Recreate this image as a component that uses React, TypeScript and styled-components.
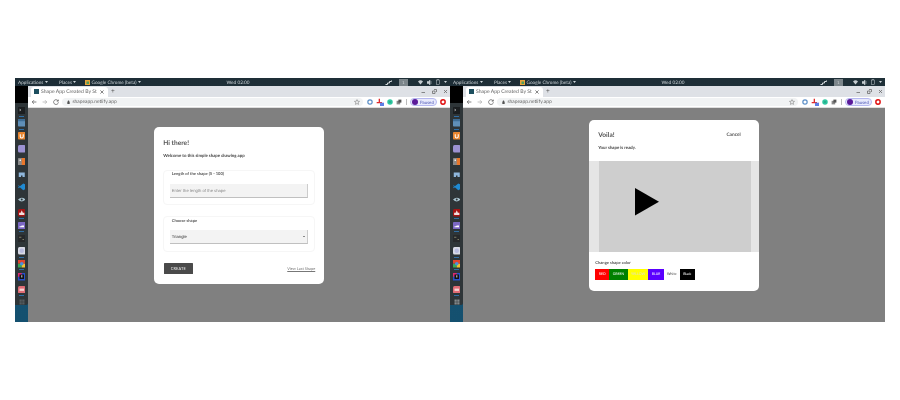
import React from "react";
import styled, { createGlobalStyle } from "styled-components";

const Global = createGlobalStyle`
  html, body { margin: 0; padding: 0; background: #fff; }
  body { font-family: Lato, "Liberation Sans", sans-serif; text-rendering: geometricPrecision; }
  * { box-sizing: border-box; }
`;

const Page = styled.div`
  width: 900px;
  height: 400px;
  padding: 78px 15px 78px;
  display: flex;
  overflow: hidden;
`;

const Screen = styled.div`
  width: 435px;
  height: 244px;
  display: flex;
  flex-direction: column;
  background: #808080;
  filter: blur(0.45px);
`;

const TopBar = styled.div`
  height: 8px;
  flex: none;
  display: flex;
  align-items: center;
  padding: 0 3px 0 3px;
  background: linear-gradient(90deg, #1d2d36, #1f3038);
  color: #cdd4d8;
  font-size: 4.7px;
  line-height: 8px;
  white-space: nowrap;
`;

const MenuItem = styled.span<{ $w: number }>`
  width: ${(p) => p.$w}px;
  display: flex;
  align-items: center;
  gap: 1.5px;
  flex: none;
`;

const Clock = styled.span`
  width: 60px;
  text-align: center;
  margin-left: 63px;
  flex: none;
`;

const Tray = styled.div`
  margin-left: auto;
  display: flex;
  align-items: center;
  gap: 4px;
`;

const WorkspaceBox = styled.span`
  width: 9px;
  height: 7px;
  margin: 0 6px 0 3px;
  background: #7c868b;
  color: #d5dadd;
  font-size: 4px;
  line-height: 7px;
  text-align: center;
`;

const Body = styled.div`
  flex: 1;
  min-height: 0;
  display: flex;
`;

const DockColumn = styled.div`
  width: 13px;
  flex: none;
  display: flex;
  flex-direction: column;
  background: linear-gradient(180deg, #1a5578, #14506f);
`;

const DockBlack = styled.div`
  height: 17px;
  flex: none;
  background: #000;
`;

const DockPanel = styled.div`
  height: 202px;
  flex: none;
  display: flex;
  flex-direction: column;
  align-items: center;
  padding-top: 1px;
  background: #2e3538;
  border-bottom-right-radius: 2px;
`;

const DockSlot = styled.div<{ $running?: boolean }>`
  height: 12.8px;
  width: 13px;
  flex: none;
  display: flex;
  justify-content: center;
  align-items: center;
  position: relative;
  &::after {
    content: "";
    display: ${(p) => (p.$running ? "block" : "none")};
    position: absolute;
    left: 4px;
    bottom: 0;
    width: 5px;
    height: 1px;
    background: #2f6ea5;
  }
`;

const Browser = styled.div`
  flex: 1;
  min-width: 0;
  display: flex;
  flex-direction: column;
`;

const TabStrip = styled.div`
  height: 11px;
  flex: none;
  background: #dee1e6;
  display: flex;
  align-items: flex-end;
  padding-left: 3px;
  padding-right: 3px;
`;

const Tab = styled.div`
  width: 77px;
  height: 10.5px;
  flex: none;
  background: #fff;
  border-radius: 3px 3px 0 0;
  display: flex;
  align-items: center;
  padding: 0 4px 0 3px;
  gap: 2px;
  font-size: 5.1px;
  color: #666;
  white-space: nowrap;
  overflow: hidden;
`;

const Favicon = styled.span`
  width: 5px;
  height: 5px;
  background: #1d4f5f;
  flex: none;
`;

const TabTitle = styled.span`
  flex: 1;
`;

const NewTab = styled.span`
  margin-left: 3px;
  align-self: center;
  font-size: 6.5px;
  line-height: 8px;
  color: #555;
`;

const WindowControls = styled.div`
  margin-left: auto;
  margin-right: -1px;
  align-self: center;
  display: flex;
  gap: 6px;
`;

const Toolbar = styled.div`
  height: 11px;
  flex: none;
  background: #fff;
  display: flex;
  align-items: center;
  padding-left: 3px;
  padding-right: 4px;
  border-bottom: 0.5px solid #ddd;
`;

const NavGroup = styled.div`
  display: flex;
  align-items: center;
  gap: 5px;
  flex: none;
`;

const Omnibox = styled.div`
  width: 301px;
  height: 8.5px;
  margin-left: 3px;
  flex: none;
  background: #f1f3f4;
  border-radius: 5px;
  display: flex;
  align-items: center;
  gap: 2.5px;
  padding: 0 3px 0 5px;
  font-size: 4.9px;
  color: #666;
`;

const Star = styled.span`
  margin-left: auto;
  display: flex;
`;

const Extensions = styled.div`
  display: flex;
  align-items: center;
  gap: 3px;
  margin-left: 4px;
  flex: none;
`;

const Divider = styled.span`
  width: 0.5px;
  height: 6px;
  background: #bbb;
  margin: 0 0 0 1px;
`;

const ProfilePill = styled.div`
  width: 27px;
  height: 8.5px;
  flex: none;
  border-radius: 5px;
  border: 0.5px solid #b5b8f0;
  background: #e8eafc;
  display: flex;
  align-items: center;
  gap: 2px;
  padding-left: 1px;
  color: #4a55b5;
  font-size: 4.4px;
`;

const Avatar = styled.span`
  width: 6.5px;
  height: 6.5px;
  border-radius: 50%;
  background: #5b1a9a;
  flex: none;
`;

const Content = styled.div`
  flex: 1;
  min-height: 0;
  background: #808080;
  display: flex;
  align-items: center;
  justify-content: center;
  padding-bottom: 20px;
`;

const Card = styled.div<{ $h: number }>`
  width: 169.5px;
  height: ${(p) => p.$h}px;
  background: #fff;
  border-radius: 5px;
  color: #333;
`;

const FormCard = styled(Card)`
  padding: 12px 9px 0;
`;

const Title = styled.h1`
  margin: 0;
  font-size: 6.6px;
  line-height: 8px;
  font-weight: 700;
  color: #555;
`;

const Lead = styled.p`
  margin: 6px 0 0;
  font-size: 4.3px;
  line-height: 6px;
  font-weight: 700;
  color: #444;
`;

const FieldGroup = styled.div<{ $top: number; $h: number }>`
  margin-top: ${(p) => p.$top}px;
  height: ${(p) => p.$h}px;
  width: 152px;
  border: 1px solid #f6f6f6;
  border-radius: 4px;
  padding: 0.5px 6px 0;
`;

const FieldLabel = styled.div<{ $gap: number }>`
  font-size: 4.1px;
  line-height: 5px;
  font-weight: 700;
  color: #555;
  padding-left: 1.5px;
  margin-bottom: ${(p) => p.$gap}px;
`;

const FieldBox = styled.div`
  height: 14px;
  width: 137.5px;
  background: #f3f3f3;
  border-bottom: 1px solid #c0c0c0;
  border-right: 0.5px solid #ccc;
  display: flex;
  align-items: center;
  justify-content: space-between;
  padding: 0 1.5px 0 1.5px;
  font-family: "Liberation Sans", Arial, sans-serif;
  font-size: 4.2px;
`;

const Placeholder = styled.span`
  color: #8a8a8a;
`;

const SelectValue = styled.span`
  color: #333;
`;

const Caret = styled.span`
  width: 0;
  height: 0;
  border-left: 1.2px solid transparent;
  border-right: 1.2px solid transparent;
  border-top: 1.8px solid #222;
`;

const FormFooter = styled.div`
  margin-top: 11px;
  width: 152px;
  display: flex;
  align-items: center;
  justify-content: space-between;
`;

const CreateButton = styled.button`
  width: 29px;
  height: 10.5px;
  margin-left: 0.5px;
  border: none;
  padding: 0;
  border-radius: 0.5px;
  background: #4a4a4a;
  color: #eee;
  font-family: Lato, sans-serif;
  font-size: 3.9px;
  letter-spacing: 0.15px;
`;

const LastLink = styled.a`
  font-size: 3.9px;
  color: #777;
  text-decoration: underline;
`;

const ResultCard = styled(Card)`
  display: flex;
  flex-direction: column;
`;

const ResultHeader = styled.div`
  height: 41px;
  flex: none;
  padding: 11.5px 18px 0 9px;
`;

const HeaderRow = styled.div`
  display: flex;
  justify-content: space-between;
  align-items: center;
  height: 8px;
`;

const CancelLink = styled.span`
  font-size: 4.8px;
  font-weight: 700;
  color: #555;
`;

const ReadyText = styled(Lead)`
  margin-top: 6px;
`;

const PreviewBand = styled.div`
  height: 91.5px;
  flex: none;
  background: #e5e5e5;
  padding: 0 8px 0 9.5px;
`;

const Canvas = styled.div`
  height: 100%;
  background: #cecece;
  padding: 27.5px 0 0 36px;
`;

const ColorArea = styled.div`
  padding: 8px 5px 0 6px;
`;

const ColorLabel = styled.div`
  font-size: 4.1px;
  line-height: 5px;
  font-weight: 700;
  color: #555;
`;

const Swatches = styled.div`
  margin-top: 3.5px;
  display: flex;
  align-items: stretch;
  height: 11.5px;
`;

const Swatch = styled.span<{ $bg: string; $fg: string; $w: number; $ml?: number }>`
  width: ${(p) => p.$w}px;
  margin-left: ${(p) => p.$ml ?? 0}px;
  flex: none;
  background: ${(p) => p.$bg};
  color: ${(p) => p.$fg};
  font-size: 3.5px;
  display: flex;
  align-items: center;
  justify-content: center;
`;

const Chevron = () => (
  <svg width="3" height="2" viewBox="0 0 6 4"><path d="M0 0h6L3 4z" fill="currentColor" /></svg>
);

const WindowIcons = () => (
  <>
    <svg width="5" height="5" viewBox="0 0 10 10"><path d="M1 7h7" stroke="#666" strokeWidth="1.5" /></svg>
    <svg width="5" height="5" viewBox="0 0 10 10"><path d="M1 4h5v5H1zM4 1h5v5" fill="none" stroke="#666" strokeWidth="1.5" /></svg>
    <svg width="5" height="5" viewBox="0 0 10 10"><path d="M2 2l6 6M8 2l-6 6" stroke="#666" strokeWidth="1.5" /></svg>
  </>
);

const NavIcons = () => (
  <NavGroup>
    <svg width="6" height="6" viewBox="0 0 10 10"><path d="M9 5H2M5 2L2 5l3 3" fill="none" stroke="#555" strokeWidth="1.2" /></svg>
    <svg width="6" height="6" viewBox="0 0 10 10"><path d="M1 5h7M5 2l3 3-3 3" fill="none" stroke="#aaa" strokeWidth="1.2" /></svg>
    <svg width="6" height="6" viewBox="0 0 10 10"><path d="M8.5 3.2A4 4 0 1 0 9 5.500M8.800 1v2.600H6.200" fill="none" stroke="#555" strokeWidth="1.2" /></svg>
  </NavGroup>
);

const ExtensionIcons = () => (
  <Extensions>
    <svg width="6" height="6" viewBox="0 0 10 10"><circle cx="5" cy="5" r="3.6" fill="none" stroke="#5b8fc7" strokeWidth="2" /></svg>
    <svg width="8" height="8" viewBox="0 0 12 12"><path d="M5 1v6M1 7h8" stroke="#e02b2b" strokeWidth="2" /><rect x="6" y="7" width="6" height="5" fill="#5d7ee6" /></svg>
    <svg width="6" height="6" viewBox="0 0 10 10"><circle cx="5" cy="5" r="4.6" fill="#2fc7a0" /><path d="M3 5h4" stroke="#176" strokeWidth="1" /></svg>
    <svg width="6" height="6" viewBox="0 0 10 10"><rect x="1" y="3" width="6" height="6" fill="#8a8a8a" /><rect x="4" y="1" width="5" height="5" fill="#555" /></svg>
    <Divider />
    <ProfilePill><Avatar />Paused</ProfilePill>
    <svg width="6" height="6" viewBox="0 0 10 10"><circle cx="5" cy="5" r="3.6" fill="none" stroke="#e01010" strokeWidth="2.4" /></svg>
  </Extensions>
);

const TrayIcons = () => (
  <Tray>
    <svg width="7" height="5" viewBox="0 0 14 10"><path d="M1 9h4V6h4V3h4V1" fill="none" stroke="#d5dadd" strokeWidth="2" /></svg>
    <WorkspaceBox>1</WorkspaceBox>
    <svg width="5" height="5" viewBox="0 0 10 10"><path d="M0 3a7 7 0 0 1 10 0L5 9z" fill="#c5ccd0" /></svg>
    <svg width="5" height="5" viewBox="0 0 10 10"><path d="M0 3h3l3-3v10L3 7H0zM8 2v6" fill="#c5ccd0" stroke="#c5ccd0" /></svg>
    <svg width="4" height="5.5" viewBox="0 0 8 11"><rect x="1" y="2" width="6" height="8.5" fill="none" stroke="#c5ccd0" /><rect x="3" width="2" height="2" fill="#c5ccd0" /></svg>
    <Chevron />
  </Tray>
);

const Sq = ({ c, r = 1, children }: { c: string; r?: number; children?: React.ReactNode }) => (
  <svg width="7.5" height="7.5" viewBox="0 0 10 10">
    <rect width="10" height="10" rx={r} fill={c} />
    {children}
  </svg>
);

const dockIcons: React.ReactNode[] = [
  <Sq key="a" c="#1b1e20"><path d="M2 3l2 1-2 1" stroke="#bbb" fill="none" /></Sq>,
  <Sq key="b" c="#5f8fb8"><rect y="0" width="10" height="3" fill="#3d6d96" /></Sq>,
  <Sq key="c" c="#e8852f"><path d="M3 3v3a2 2 0 0 0 4 0V3" stroke="#fff" strokeWidth="1.4" fill="none" /></Sq>,
  <Sq key="d" c="#9c92d2" r={2} />,
  <Sq key="e" c="#8a8a8a"><rect x="5" width="5" height="10" fill="#e9772b" /><path d="M2 2h2v2H2z" fill="#eee" /></Sq>,
  <Sq key="f" c="#2e3538"><path d="M1 2h8v6H6V6H4v2H1z" fill="#8fb7dc" /></Sq>,
  <svg key="g" width="7.5" height="7.5" viewBox="0 0 10 10"><path d="M7 .5l2.500 1.300v6.400L7 9.500 2.500 5.800 1 7 0 6l2-1-2-1 1-1 1.500 1.200z" fill="#1f8ad2" /></svg>,
  <svg key="h" width="7.5" height="5" viewBox="0 0 12 8"><path d="M0 4q6-6 12 0-6 6-12 0z" fill="#a9c4d0" /><circle cx="6" cy="4" r="1.6" fill="#2e3538" /></svg>,
  <Sq key="i" c="#a31313" r={2}><path d="M5 1.500L6.500 5h2v3h-7V5h2z" fill="#f2dede" /></Sq>,
  <Sq key="j" c="#7b68c4"><path d="M2 7h6V4.500H5L4 5.500H2z" fill="#fff" /></Sq>,
  <Sq key="k" c="#26282a"><path d="M1.500 3h3M6 6h2" stroke="#99997a" /></Sq>,
  <Sq key="l" c="#d9dbe6" r={2}><circle cx="5" cy="5" r="3" fill="#b9bde0" /></Sq>,
  <svg key="m" width="7.5" height="7.5" viewBox="0 0 10 10"><rect width="10" height="5" fill="#e0452f" /><rect y="5" width="5" height="5" fill="#3aa757" /><rect x="5" y="5" width="5" height="5" fill="#f2c230" /><circle cx="5" cy="5" r="2.4" fill="#4a90dd" /></svg>,
  <svg key="n" width="7.5" height="7.5" viewBox="0 0 10 10"><rect width="10" height="10" fill="#2750c9" /><rect x="0" width="5" height="5" fill="#d92b70" /><rect x="2" y="2" width="6" height="6" fill="#111" /><rect x="4.500" y="3" width="1.200" height="3" fill="#eee" /></svg>,
  <Sq key="o" c="#e06c75" r={2}><rect x="2" y="3.500" width="6" height="3" fill="#f5d5d5" /></Sq>,
];

const running = [true, true, false, false, false, false, false, false, true, true, false, true, true, false, true, false];

const Dock = ({ bright }: { bright: boolean }) => (
  <DockColumn>
    <DockBlack />
    <DockPanel>
      {dockIcons.map((icon, i) => (
        <DockSlot key={i} $running={running[i]}>{icon}</DockSlot>
      ))}
      <DockSlot>
        <svg width="6" height="6" viewBox="0 0 10 10" fill={bright ? "#b5babd" : "#6c7275"}>
          {[1, 4, 7].flatMap((y) => [1, 4, 7].map((x) => <rect key={`${x}-${y}`} x={x} y={y} width="2" height="2" />))}
        </svg>
      </DockSlot>
    </DockPanel>
  </DockColumn>
);

const Desktop = ({ children, bright }: { children: React.ReactNode; bright: boolean }) => (
  <Screen>
    <TopBar>
      <MenuItem $w={41}>Applications <Chevron /></MenuItem>
      <MenuItem $w={26}>Places <Chevron /></MenuItem>
      <MenuItem $w={60}>
        <svg width="5" height="5" viewBox="0 0 10 10"><rect width="10" height="10" fill="#e8a33a" /><rect x="3" y="3" width="5" height="5" fill="#4f9e5a" /></svg>
        Google Chrome (beta) <Chevron />
      </MenuItem>
      <Clock>Wed 02:00</Clock>
      <TrayIcons />
    </TopBar>
    <Body>
      <Dock bright={bright} />
      <Browser>
        <TabStrip>
          <Tab>
            <Favicon />
            <TabTitle>Shape App Created By St</TabTitle>
            <svg width="4" height="4" viewBox="0 0 10 10"><path d="M1 1l8 8M9 1l-8 8" stroke="#444" strokeWidth="1.6" /></svg>
          </Tab>
          <NewTab>+</NewTab>
          <WindowControls><WindowIcons /></WindowControls>
        </TabStrip>
        <Toolbar>
          <NavIcons />
          <Omnibox>
            <svg width="3" height="4" viewBox="0 0 6 8"><path d="M1 3.500h4V8H1zM2 3.500V1.500h2v2" fill="#555" stroke="#555" strokeWidth="0.6" /></svg>
            shapeapp.netlify.app
            <Star>
              <svg width="6" height="6" viewBox="0 0 10 10"><path d="M5 1l1.200 2.700 3 .3-2.300 2 .7 3L5 7.500 2.400 9l.7-3L.8 4l3-.3z" fill="none" stroke="#666" strokeWidth="0.8" /></svg>
            </Star>
          </Omnibox>
          <ExtensionIcons />
        </Toolbar>
        <Content>{children}</Content>
      </Browser>
    </Body>
  </Screen>
);

const swatches = [
  { label: "RED", bg: "#ff0000", fg: "#fff", w: 14 },
  { label: "GREEN", bg: "#008000", fg: "#fff", w: 18.5 },
  { label: "YELLOW", bg: "#ffff00", fg: "#ddd", w: 20.5 },
  { label: "BLUE", bg: "#5a00ff", fg: "#fff", w: 15.5 },
  { label: "White", bg: "#fff", fg: "#333", w: 13, ml: 1.5 },
  { label: "Black", bg: "#000", fg: "#fff", w: 15, ml: 1.5 },
];

export default function App() {
  return (
    <>
      <Global />
      <Page>
        <Desktop bright={false}>
          <FormCard $h={157}>
            <Title>Hi there!</Title>
            <Lead>Welcome to this simple shape drawing app</Lead>
            <FieldGroup $top={11} $h={35}>
              <FieldLabel $gap={7.5}>Length of the shape (5 - 100)</FieldLabel>
              <FieldBox><Placeholder>Enter the length of the shape</Placeholder></FieldBox>
            </FieldGroup>
            <FieldGroup $top={11.5} $h={36}>
              <FieldLabel $gap={7.5}>Choose shape</FieldLabel>
              <FieldBox><SelectValue>Triangle</SelectValue><Caret /></FieldBox>
            </FieldGroup>
            <FormFooter>
              <CreateButton>CREATE</CreateButton>
              <LastLink>View Last Shape</LastLink>
            </FormFooter>
          </FormCard>
        </Desktop>
        <Desktop bright>
          <ResultCard $h={171}>
            <ResultHeader>
              <HeaderRow>
                <Title>Voila!</Title>
                <CancelLink>Cancel</CancelLink>
              </HeaderRow>
              <ReadyText>Your shape is ready.</ReadyText>
            </ResultHeader>
            <PreviewBand>
              <Canvas>
                <svg width="24" height="27.5" viewBox="0 0 24 27.5"><path d="M0 0L24 13.700 0 27.500z" fill="#000" /></svg>
              </Canvas>
            </PreviewBand>
            <ColorArea>
              <ColorLabel>Change shape color</ColorLabel>
              <Swatches>
                {swatches.map((s) => (
                  <Swatch key={s.label} $bg={s.bg} $fg={s.fg} $w={s.w} $ml={s.ml}>{s.label}</Swatch>
                ))}
              </Swatches>
            </ColorArea>
          </ResultCard>
        </Desktop>
      </Page>
    </>
  );
}
